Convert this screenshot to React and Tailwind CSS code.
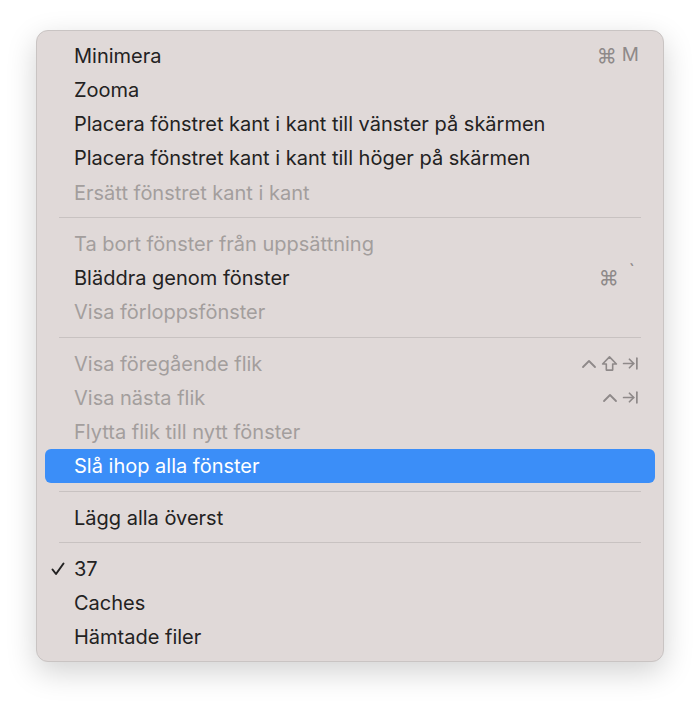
const groups = [
  [
    { label: "Minimera", shortcut: "⌘M" },
    { label: "Zooma" },
    { label: "Placera fönstret kant i kant till vänster på skärmen" },
    { label: "Placera fönstret kant i kant till höger på skärmen" },
    { label: "Ersätt fönstret kant i kant", disabled: true },
  ],
  [
    { label: "Ta bort fönster från uppsättning", disabled: true },
    { label: "Bläddra genom fönster", shortcut: "⌘`" },
    { label: "Visa förloppsfönster", disabled: true },
  ],
  [
    { label: "Visa föregående flik", disabled: true, shortcut: "prev" },
    { label: "Visa nästa flik", disabled: true, shortcut: "next" },
    { label: "Flytta flik till nytt fönster", disabled: true },
    { label: "Slå ihop alla fönster", active: true },
  ],
  [{ label: "Lägg alla överst" }],
  [{ label: "37", checked: true }, { label: "Caches" }, { label: "Hämtade filer" }],
];

const Caret = () => (
  <svg width="16" height="12" viewBox="0 0 16 12" fill="none" stroke="currentColor" strokeWidth="1.8" strokeLinecap="round" strokeLinejoin="round">
    <path d="M2 9 L8 3 L14 9" />
  </svg>
);

const Shift = () => (
  <svg width="17" height="17" viewBox="0 0 16 16" fill="none" stroke="currentColor" strokeWidth="1.5" strokeLinejoin="round">
    <path d="M8 1.8 L14.5 8.5 H11 V14.2 H5 V8.5 H1.5 Z" />
  </svg>
);

const Tab = () => (
  <svg width="17" height="15" viewBox="0 0 16 14" fill="none" stroke="currentColor" strokeWidth="1.6" strokeLinecap="round" strokeLinejoin="round">
    <path d="M1.5 7 H11" />
    <path d="M7 3 L11 7 L7 11" />
    <path d="M14 2 V12" />
  </svg>
);

const Check = () => (
  <svg width="14" height="14" viewBox="0 0 14 14" fill="none" stroke="currentColor" strokeWidth="2" strokeLinecap="round" strokeLinejoin="round">
    <path d="M1.5 7.5 L5 12 L12.5 1.5" />
  </svg>
);

const Shortcut = ({ kind }) => {
  if (kind === "prev")
    return (
      <span className="flex items-center gap-[4px]">
        <Caret />
        <Shift />
        <Tab />
      </span>
    );
  if (kind === "next")
    return (
      <span className="flex items-center gap-[4px]">
        <Caret />
        <Tab />
      </span>
    );
  if (kind === "⌘M")
    return (
      <span className="flex items-center gap-[5px]">
        <span className="text-[20px]">⌘</span>
        <span>M</span>
      </span>
    );
  return (
    <span className="flex items-center gap-[10px] pr-[4px]">
      <span className="text-[20px]">⌘</span>
      <span className="relative -top-[6px]">`</span>
    </span>
  );
};

const Row = ({ item }) => {
  const text = item.active ? "text-white" : item.disabled ? "text-[#a39e9d]" : "text-[#232222]";
  return (
    <div
      className={`relative flex items-center h-[34.25px] mx-[8px] pl-[29px] pr-[16px] pt-[1px] rounded-[6px] ${
        item.active ? "bg-[#3b8ef8]" : ""
      } ${text}`}
    >
      {item.checked && (
        <span className="absolute left-[6px] top-[11px]">
          <Check />
        </span>
      )}
      <span className="flex-1">{item.label}</span>
      {item.shortcut && (
        <span className="text-[#8e8989] text-[19px]">
          <Shortcut kind={item.shortcut} />
        </span>
      )}
    </div>
  );
};

export default function App() {
  return (
    <div className="w-[700px] h-[704px] bg-white pt-[30px] pl-[36px]" style={{ fontFamily: "Inter, 'Liberation Sans', sans-serif" }}>
      <div className="w-[628px] rounded-[12px] bg-[#e0d9d8] border border-[#c9c4c3] py-[7px] text-[20px] shadow-[0_10px_30px_rgba(0,0,0,0.18)]">
        {groups.map((g, i) => (
          <div key={i}>
            {i > 0 && (
              <div className="h-[17px] flex items-center px-[22px]">
                <div className="h-px w-full bg-[#c8c2c1]" />
              </div>
            )}
            {g.map((item) => (
              <Row key={item.label} item={item} />
            ))}
          </div>
        ))}
      </div>
    </div>
  );
}
